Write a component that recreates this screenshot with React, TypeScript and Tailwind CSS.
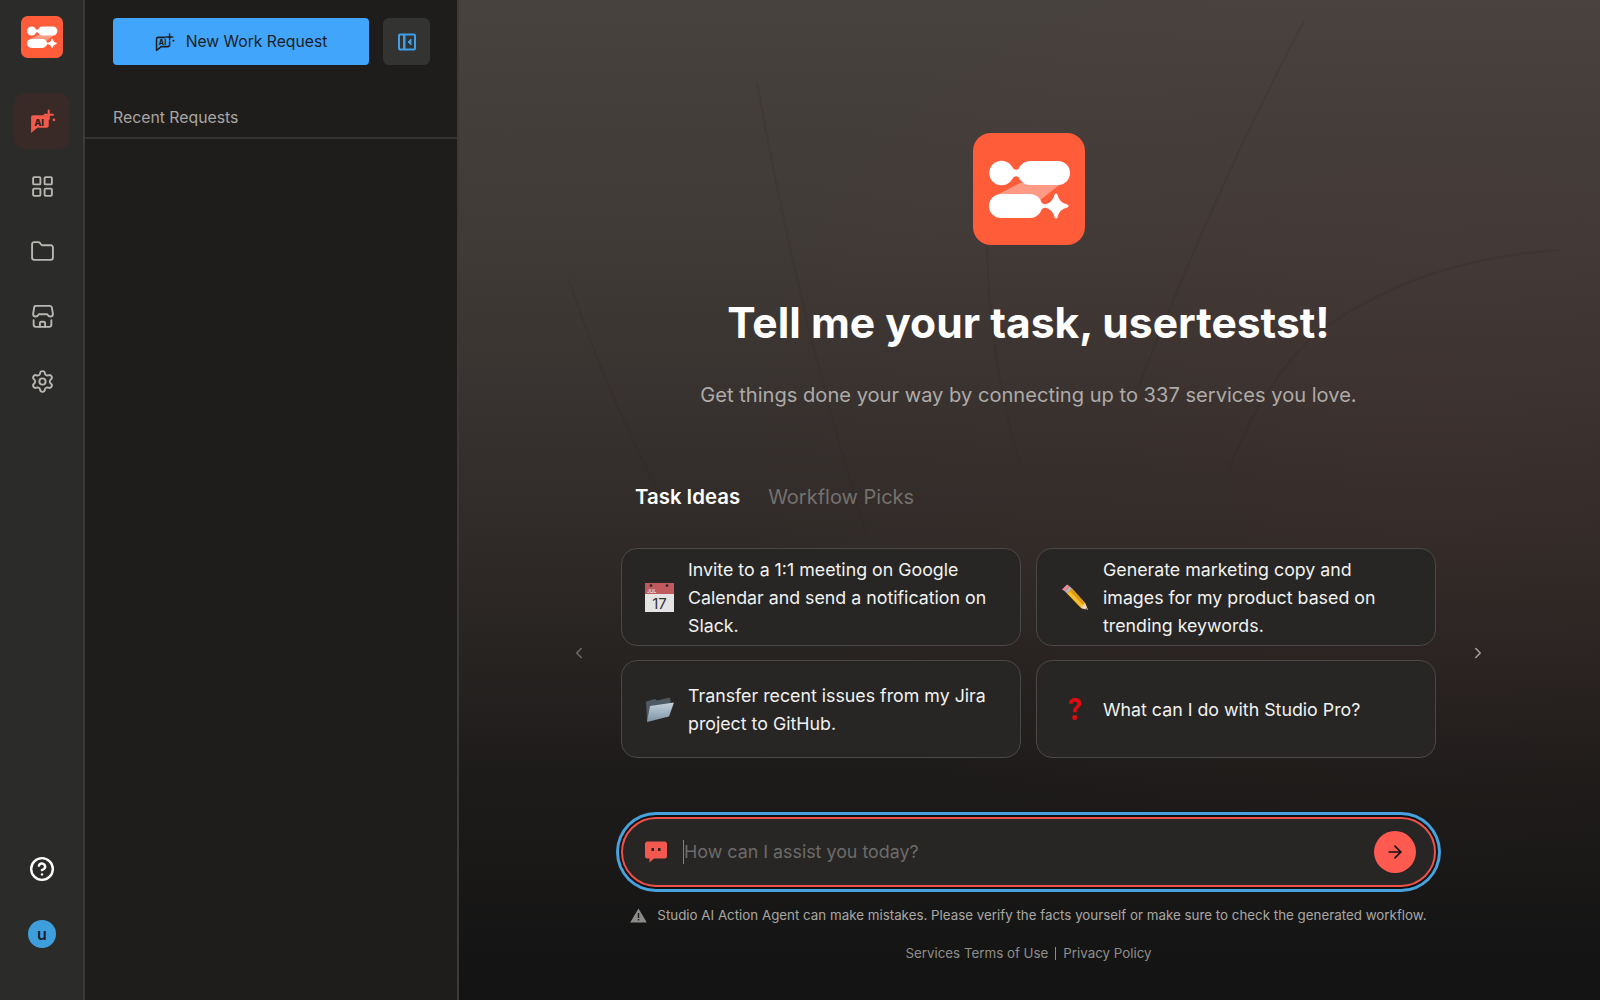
import { ArrowRight, ChevronLeft, ChevronRight, CircleHelp, Folder, LayoutGrid, Settings } from 'lucide-react';
import { FC, ReactNode } from 'react';

const Logo: FC<{ size: number; className?: string }> = ({ size, className }) => (
    <svg width={size} height={size} viewBox="0 0 112 112" className={className}>
        <rect width="112" height="112" rx="18" fill="#ff5c3a" />
        <path d="M47 50H89L67 67L24 62Z" fill="#fff" fillOpacity="0.38" />
        <circle cx="28.5" cy="40" r="12.2" fill="#fff" />
        <path d="M39 34Q42 39 47 35V45Q42 41 39 46Z" fill="#fff" />
        <rect x="45" y="28" width="52" height="24" rx="12" fill="#fff" />
        <rect x="16" y="61" width="53" height="24" rx="12" fill="#fff" />
        <path d="M66 67Q70 72 75 72V74Q70 74 66 79Z" fill="#fff" />
        <path d="M83 62Q85 71 94 73Q85 75 83 84Q81 75 72 73Q81 71 83 62Z" fill="#fff" stroke="#fff" strokeWidth="3" strokeLinejoin="round" />
    </svg>
);

const AiChat: FC<{ color: string; filled?: boolean; size: number }> = ({ color, filled, size }) => (
    <svg width={size} height={size} viewBox="0 0 26 26" fill="none">
        {filled ? (
            <path d="M4 7H19V17a2 2 0 0 1-2 2H8l-6 5V9a2 2 0 0 1 2-2z" fill={color} />
        ) : (
            <path d="M14 7H4a2 2 0 0 0-2 2v15l6-5h9a2 2 0 0 0 2-2v-5" stroke={color} strokeWidth="2" strokeLinejoin="round" />
        )}
        <text x="5" y="17" fontSize="9" fontWeight="800" fontFamily="Inter, sans-serif" fill={filled ? '#2c2220' : color}>
            AI
        </text>
        <path d="M19 2.500v8M15 6.500h8" stroke={color} strokeWidth="2" strokeLinecap="round" />
        <circle cx="24" cy="11.500" r="1.300" fill={color} />
    </svg>
);

const StoreIcon = () => (
    <svg width="25" height="25" viewBox="0 0 24 24" fill="none" stroke="#b9b7b3" strokeWidth="1.800" strokeLinejoin="round" strokeLinecap="round">
        <path d="M5 1.800h14a2 2 0 0 1 2 1.700l1 6c0 1.600-1.100 2.500-2.500 2.500-1.500 0-2.500-1-3-2.200H8.500C8 11 7 12 5.500 12 4.100 12 3 11.100 3 9.500l1-6a2 2 0 0 1 1-1.700z" />
        <path d="M3.500 15.500V20a2 2 0 0 0 2 2h13a2 2 0 0 0 2-2v-4.500" />
        <path d="M9.500 22v-3.500a1.500 1.500 0 0 1 1.500-1.500h2a1.500 1.500 0 0 1 1.500 1.500V22" />
    </svg>
);

const CalendarEmoji = () => (
    <svg width="29" height="29" viewBox="0 0 29 29">
        <rect width="29" height="29" fill="#e4e4e4" />
        <rect width="29" height="11" fill="#bf5a5e" />
        <circle cx="6" cy="2.500" r="1.300" fill="#222" />
        <circle cx="22" cy="2.500" r="1.300" fill="#222" />
        <text x="2" y="9.500" fontSize="5" fontFamily="Inter, sans-serif" fill="#fff">JUL</text>
        <text x="14.500" y="26" fontSize="15" textAnchor="middle" fontFamily="Inter, sans-serif" fill="#333">17</text>
    </svg>
);

const PencilEmoji = () => (
    <svg width="28" height="28" viewBox="0 0 28 28">
        <path d="M1 6.500L6 1.500L9 3.500L4 8.500Z" fill="#e88a94" />
        <path d="M4 8.500L9 3.500L11 5.500L6 10.500Z" fill="#b9b9b9" />
        <path d="M6 10.500L11 5.500L24 20L27 27L20 25Z" fill="#f7c02c" />
        <path d="M8.500 8L11 5.500L24 20L22 22Z" fill="#e09b16" />
        <path d="M20 25L24 20L27 27Z" fill="#eed9b8" />
        <path d="M25 25L27 27L24.500 26.500Z" fill="#222" />
    </svg>
);

const FolderEmoji = () => (
    <svg width="29" height="28" viewBox="0 0 29 28">
        <defs>
            <linearGradient id="folderFront" x1="0" y1="0" x2="0" y2="1">
                <stop offset="0" stopColor="#c5d2dc" />
                <stop offset="1" stopColor="#7e93a6" />
            </linearGradient>
        </defs>
        <path d="M1 6.500L10 4L12 5.500L25 2.500L26 9L4 26L2 26Z" fill="#4f5a63" />
        <path d="M5 11L29 7.500L24 21.500L2 27Z" fill="url(#folderFront)" />
    </svg>
);

const QuestionEmoji = () => (
    <svg width="16" height="24" viewBox="0 0 16 24">
        <path d="M2 6.500C2 3 4.800 1 8.300 1c3.500 0 6 2 6 5.200 0 4.500-4.700 4.400-4.700 9H6c0-5.600 4.300-6 4.300-8.700C10.300 5.500 9.500 4.500 8 4.500 6.500 4.500 5.600 5.500 5.500 7z" fill="#e00b10" />
        <circle cx="7.800" cy="20.500" r="2.500" fill="#e00b10" />
    </svg>
);

const NavItem: FC<{ children: ReactNode; active?: boolean }> = ({ children, active }) => (
    <div className={`flex h-14 w-14 items-center justify-center rounded-xl ${active ? 'bg-[#392a27]' : ''}`}>{children}</div>
);

const TaskCard: FC<{ icon: ReactNode; children: ReactNode }> = ({ icon, children }) => (
    <div className="flex h-[98px] items-center rounded-2xl border border-[#4a4947] bg-[#272625] pl-[23px]">
        <div className="flex w-[29px] shrink-0 justify-center">{icon}</div>
        <p className="ml-[14px] w-[310px] pt-[2px] text-[17.8px] leading-[28px] text-[#f2f2f0]">{children}</p>
    </div>
);

export default function App() {
    return (
        <div className="flex h-[1000px] w-full overflow-hidden bg-[#1e1d1c] font-['Inter',sans-serif]">
            {/* Icon rail */}
            <aside className="flex w-[85px] shrink-0 flex-col items-center border-r-2 border-[#3b3a39] bg-[#2b2b2a] pb-[52px] pl-px pt-4">
                <Logo size={42} />
                <div className="mt-[35px] flex flex-col gap-[9px]">
                    <NavItem active>
                        <AiChat color="#f25a4c" filled size={27} />
                    </NavItem>
                    <NavItem>
                        <LayoutGrid size={25} color="#b9b7b3" strokeWidth={1.8} />
                    </NavItem>
                    <NavItem>
                        <Folder size={25} color="#b9b7b3" strokeWidth={1.8} />
                    </NavItem>
                    <NavItem>
                        <StoreIcon />
                    </NavItem>
                    <NavItem>
                        <Settings size={25} color="#b9b7b3" strokeWidth={1.8} />
                    </NavItem>
                </div>
                <div className="mt-auto flex flex-col items-center gap-[38px]">
                    <CircleHelp size={26} color="#ffffff" strokeWidth={2.2} />
                    <div className="flex h-7 w-7 items-center justify-center rounded-full bg-[#3f9fdc] text-base font-semibold text-[#14222c]">u</div>
                </div>
            </aside>

            {/* Requests panel */}
            <aside className="flex w-[374px] shrink-0 flex-col border-r-2 border-[#3b3a39] bg-[#1e1d1c]">
                <div className="flex gap-[14px] pl-[28px] pt-[18px]">
                    <button type="button" className="flex h-[47px] w-[256px] items-center justify-center gap-[11px] rounded-[4px] bg-[#42a5fc] text-[15.7px] text-[#1b1f24]">
                        <AiChat color="#1b1f24" size={20} />
                        <span className="pt-px">New Work Request</span>
                    </button>
                    <button type="button" className="flex h-[47px] w-[47px] items-center justify-center rounded-md bg-[#333332]">
                        <svg width="18" height="18" viewBox="0 0 18 18" fill="none">
                            <rect x="1" y="1.500" width="16" height="15" rx="1" stroke="#3f9fe8" strokeWidth="2" />
                            <rect x="5" y="2" width="2.500" height="14" fill="#3f9fe8" />
                            <path d="M13 6L10 9L13 12Z" fill="#3f9fe8" stroke="#3f9fe8" />
                        </svg>
                    </button>
                </div>
                <div className="mt-[41px] border-b-2 border-[#333332] pb-[7px] pl-[28px] text-[15.8px] leading-[24px] text-[#a8a6a3]">Recent Requests</div>
            </aside>

            {/* Main */}
            <main className="relative flex min-w-0 flex-1 flex-col items-center bg-[radial-gradient(ellipse_700px_500px_at_85%_42%,rgba(90,50,45,0.16),transparent),linear-gradient(180deg,#48423e_0%,#403a37_25%,#2f2a28_55%,#1d1b1a_78%,#131313_100%)] pr-[2px] pt-[133px]">
                {/* faint streaks of the backdrop */}
                <svg className="pointer-events-none absolute inset-0" width="100%" height="100%" fill="none" stroke="#2e2523" strokeOpacity="0.16" strokeWidth="2">
                    <path d="M298 82Q340 320 408 536" />
                    <path d="M528 246Q530 360 561 464" />
                    <path d="M109 278Q150 400 204 500" />
                    <path d="M845 21Q760 180 677 393" />
                    <path d="M1100 250Q950 260 850 340Q800 390 770 470" />
                </svg>

                <Logo size={112} className="relative" />
                <h1 className="relative mt-[50px] text-[42.6px] font-bold leading-[56px] text-white">Tell me your task, usertestst!</h1>
                <p className="relative mt-[30px] text-[20.1px] leading-[28px] text-[#aeaba8]">Get things done your way by connecting up to 337 services you love.</p>

                <div className="relative mt-[74px] w-[815px] pl-[14px]">
                    <div className="flex gap-[28px] leading-[28px]">
                        <span className="text-[20.4px] font-semibold text-white">Task Ideas</span>
                        <span className="text-xl text-[#75716e]">Workflow Picks</span>
                    </div>
                </div>

                <div className="relative mt-[37px] flex w-[917px] items-center justify-between">
                    <ChevronLeft size={18} color="#6f6c69" />
                    <div className="grid w-[815px] grid-cols-2 gap-x-[15px] gap-y-[14px]">
                        <TaskCard icon={<CalendarEmoji />}>Invite to a 1:1 meeting on Google Calendar and send a notification on Slack.</TaskCard>
                        <TaskCard icon={<PencilEmoji />}>Generate marketing copy and images for my product based on trending keywords.</TaskCard>
                        <TaskCard icon={<FolderEmoji />}>Transfer recent issues from my Jira project to GitHub.</TaskCard>
                        <TaskCard icon={<QuestionEmoji />}>What can I do with Studio Pro?</TaskCard>
                    </div>
                    <ChevronRight size={18} color="#a5a3a0" />
                </div>

                <div className="relative mt-[59px] flex h-[70px] w-[815px] items-center rounded-full border-2 border-[#f0524a] bg-[#272625] pl-[21px] pr-[18px] shadow-[0_0_0_2px_#0f1012,0_0_0_5px_#46a3dd]">
                    <svg width="24" height="24" viewBox="0 0 24 24">
                        <path d="M3.500 1.500h17A2.500 2.500 0 0 1 23 4v12a2.500 2.500 0 0 1-2.500 2.500H10l-4.500 4v-4h-2A2.500 2.500 0 0 1 1 16V4a2.500 2.500 0 0 1 2.500-2.500z" fill="#f2584e" />
                        <rect x="7.500" y="8" width="2.500" height="3" fill="#272625" />
                        <rect x="14" y="8" width="2.500" height="3" fill="#272625" />
                    </svg>
                    <div className="ml-[15px] flex h-6 items-center border-l-[1.5px] border-[#f0524a] text-[17.85px] text-[#6d6b69]">How can I assist you today?</div>
                    <div className="ml-auto flex h-[42px] w-[42px] items-center justify-center rounded-full bg-[#ff5a50]">
                        <ArrowRight size={20} color="#111111" strokeWidth={2} />
                    </div>
                </div>

                <div className="relative mt-[18px] flex items-center gap-[10px] text-[13.35px] leading-[20px] text-[#a9a7a4]">
                    <svg width="17" height="15" viewBox="0 0 17 15">
                        <path d="M8.500 0.500L16.800 14.500H0.200Z" fill="#8d8b88" />
                        <rect x="7.800" y="5" width="1.400" height="5" fill="#1a1918" />
                        <rect x="7.800" y="11" width="1.400" height="1.500" fill="#1a1918" />
                    </svg>
                    Studio AI Action Agent can make mistakes. Please verify the facts yourself or make sure to check the generated workflow.
                </div>
                <div className="relative mt-[18px] flex items-center gap-[7px] text-[13.33px] leading-[20px] text-[#8f8d8a]">
                    <span>Services Terms of Use</span>
                    <span className="h-[13px] w-px bg-[#8f8d8a]" />
                    <span>Privacy Policy</span>
                </div>
            </main>
        </div>
    );
}
